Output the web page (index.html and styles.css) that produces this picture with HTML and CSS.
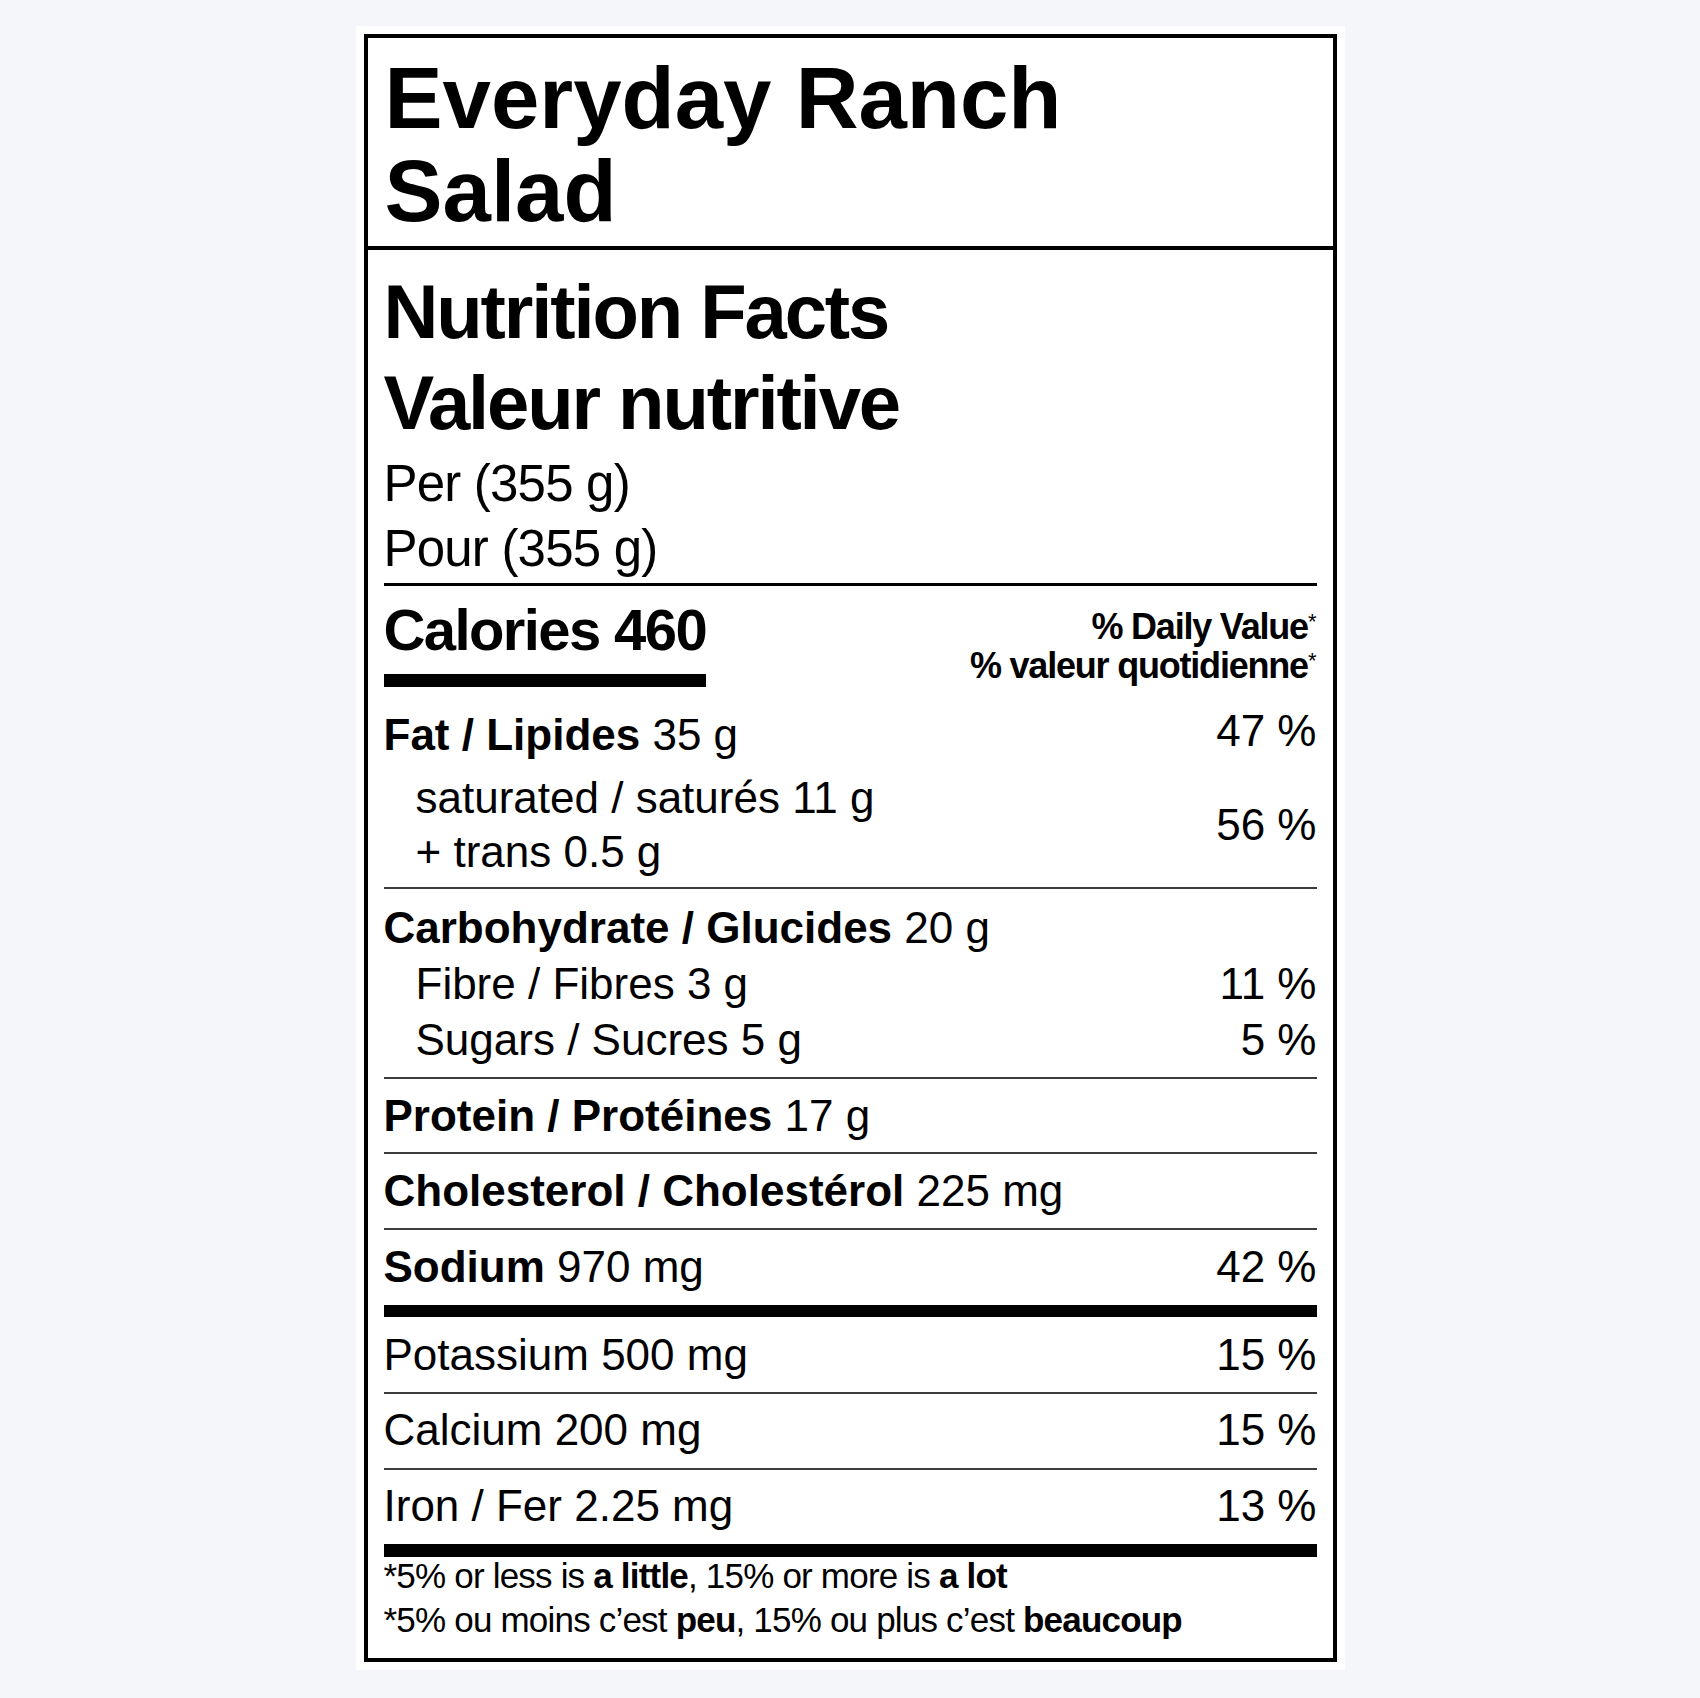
FILE: index.html
```html
<!DOCTYPE html>
<html lang="en">
<head>
<meta charset="utf-8">
<title>Everyday Ranch Salad – Nutrition Facts</title>
<link rel="stylesheet" href="styles.css">
</head>
<body>
<div class="page">
  <div class="label">
    <div class="title">Everyday Ranch<br>Salad</div>
    <div class="facts">
      <div class="heading">Nutrition Facts<br>Valeur nutritive</div>
      <div class="serving">Per (355 g)<br>Pour (355 g)</div>
      <div class="cal-row">
        <div class="cal">
          <div class="cal-text">Calories 460</div>
          <div class="cal-bar"></div>
        </div>
        <div class="dv">% Daily Value<span class="ast">*</span><br>% valeur quotidienne<span class="ast">*</span></div>
      </div>

      <div class="group fat">
        <div class="row"><span><b>Fat / Lipides</b> 35 g</span><span class="pct up">47 %</span></div>
        <div class="row sub-block">
          <div class="sub-lines">
            <div>saturated / saturés 11 g</div>
            <div>+ trans 0.5 g</div>
          </div>
          <span class="pct">56 %</span>
        </div>
      </div>

      <div class="group carb">
        <div class="row"><span><b>Carbohydrate / Glucides</b> 20 g</span></div>
        <div class="row sub"><span>Fibre / Fibres 3 g</span><span class="pct">11 %</span></div>
        <div class="row sub"><span>Sugars / Sucres 5 g</span><span class="pct">5 %</span></div>
      </div>

      <div class="group single protein">
        <div class="row"><span><b>Protein / Protéines</b> 17 g</span></div>
      </div>

      <div class="group single chol">
        <div class="row"><span><b>Cholesterol / Cholestérol</b> 225 mg</span></div>
      </div>

      <div class="group single sodium">
        <div class="row"><span><b>Sodium</b> 970 mg</span><span class="pct">42 %</span></div>
      </div>

      <div class="group single potassium">
        <div class="row"><span>Potassium 500 mg</span><span class="pct">15 %</span></div>
      </div>

      <div class="group single calcium">
        <div class="row"><span>Calcium 200 mg</span><span class="pct">15 %</span></div>
      </div>

      <div class="group single iron">
        <div class="row"><span>Iron / Fer 2.25 mg</span><span class="pct">13 %</span></div>
      </div>

      <div class="footnote">
        <div>*5% or less is <b>a little</b>, 15% or more is <b>a lot</b></div>
        <div>*5% ou moins c’est <b>peu</b>, 15% ou plus c’est <b>beaucoup</b></div>
      </div>
    </div>
  </div>
</div>
</body>
</html>
```

FILE: styles.css
```css
html, body {
  margin: 0;
  padding: 0;
}

body {
  background: #f4f6f9;
  font-family: "Liberation Sans", Arial, sans-serif;
  color: #000;
  min-height: 1698px;
}

.page {
  width: 973px;
  margin: 26px auto 0;
  padding: 8px;
  background: #fff;
}

.label {
  border: 4px solid #000;
  background: #fff;
}

.title {
  font-weight: bold;
  font-size: 87px;
  line-height: 93px;
  padding: 13px 17px 9px;
  border-bottom: 4px solid #000;
}

.facts {
  padding: 16px 16px 16px 16px;
}

.heading {
  font-weight: bold;
  font-size: 76px;
  line-height: 91px;
  letter-spacing: -2.1px;
}

.serving {
  margin-top: 3px;
  font-size: 51px;
  line-height: 65px;
  letter-spacing: -0.8px;
  padding-bottom: 2px;
  border-bottom: 3px solid #000;
}

.cal-row {
  display: flex;
  justify-content: space-between;
  align-items: flex-start;
  padding-top: 15px;
}

.cal {
  display: flex;
  flex-direction: column;
}

.cal-text {
  font-weight: bold;
  font-size: 58px;
  line-height: 58px;
  letter-spacing: -1.6px;
  white-space: nowrap;
}

.cal-bar {
  margin-top: 15px;
  height: 13px;
  background: #000;
}

.dv {
  margin-top: 6px;
  font-weight: bold;
  font-size: 36px;
  line-height: 39px;
  letter-spacing: -1.2px;
  text-align: right;
}

.ast {
  font-size: 22px;
  line-height: 0;
  vertical-align: 10px;
  font-weight: normal;
  letter-spacing: 0;
}

.group {
  font-size: 44px;
  line-height: 56px;
  border-bottom: 2px solid #3c3c3c;
}

.row {
  display: flex;
  justify-content: space-between;
  align-items: center;
  white-space: nowrap;
}

.pct {
  text-align: right;
}

.sub,
.sub-lines {
  padding-left: 32px;
}

.fat {
  padding-top: 21px;
  padding-bottom: 8px;
  line-height: 54px;
}

.fat .row:first-child {
  align-items: flex-start;
}

.pct.up {
  line-height: 46px;
}

.sub-block {
  margin-top: 9px;
}

.carb {
  padding-top: 11px;
  padding-bottom: 9px;
}

.protein {
  padding-top: 9px;
  padding-bottom: 8px;
}

.chol {
  padding-top: 9px;
  padding-bottom: 9px;
}

.sodium {
  padding-top: 9px;
  padding-bottom: 10px;
  border-bottom: 12px solid #000;
}

.potassium {
  padding-top: 10px;
  padding-bottom: 9px;
}

.calcium {
  padding-top: 8px;
  padding-bottom: 10px;
}

.iron {
  padding-top: 8px;
  padding-bottom: 10px;
  border-bottom: 13px solid #000;
}

.footnote {
  margin-top: -3px;
  font-size: 35px;
  line-height: 44px;
  letter-spacing: -0.8px;
  white-space: nowrap;
}
```
